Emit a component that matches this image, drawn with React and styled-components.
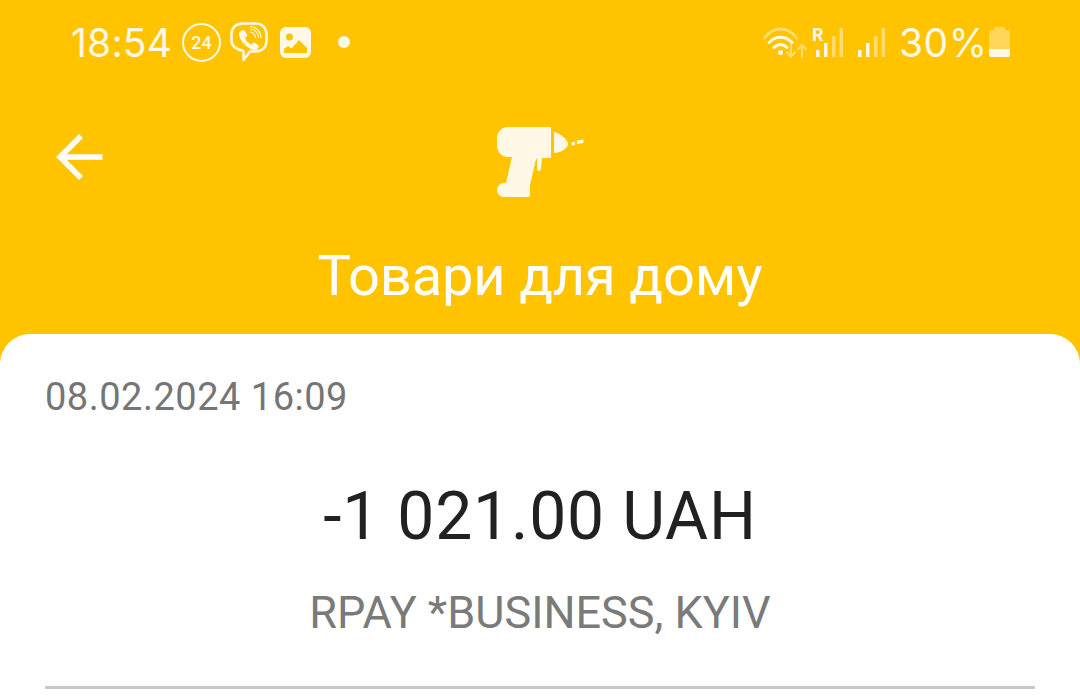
import React from "react";
import styled, { createGlobalStyle } from "styled-components";

const Global = createGlobalStyle`
  html, body { margin: 0; padding: 0; background: #fff; }
  body { font-family: Roboto, "Liberation Sans", sans-serif; }
`;
const Page = styled.div`
  width: 1080px; height: 698px; overflow: hidden; background: #FFC300;
  display: flex; flex-direction: column;
`;
const StatusBar = styled.div`
  height: 84px; box-sizing: border-box; padding: 0 70px 0 71px;
  display: flex; align-items: center; justify-content: space-between; color: #fff;
`;
const StatusGroup = styled.div`display: flex; align-items: center;`;
const Clock = styled.span`font: 400 39px Inter, sans-serif; letter-spacing: 0.2px; color: #fff8e6; width: 99px; white-space: nowrap;`;
const Percent = styled.span`font: 400 39px Inter, sans-serif; letter-spacing: 0.5px; color: #fff8e6; margin: 0 7px 0 14px; width: 83px; white-space: nowrap;`;
const Dot = styled.span`width: 12px; height: 12px; border-radius: 50%; background: #fff8e6; margin-left: 27px;`;
const Badge = styled.span`
  width: 39px; height: 39px; box-sizing: border-box; border: 2px solid #fff8e6; border-radius: 50%;
  display: flex; align-items: center; justify-content: center; margin: 0 9px 0 12px;
  font: 500 18px Roboto, sans-serif; color: #fff8e6;
`;
const GlyphSlot = styled.span`display: flex; margin-left: ${p => p.$left || 0}px;`;
const Header = styled.div`
  height: 250px; display: flex; flex-direction: column; align-items: center; position: relative;
`;
const BackButton = styled.div`position: absolute; left: 54px; top: 47px; width: 52px; height: 52px;`;
const IconWrap = styled.div`margin-top: 43px; height: 70px; display: flex;`;
const Title = styled.div`margin-top: 46px; font-size: 56px; line-height: 66px; letter-spacing: -0.15px; color: #fff; text-align: center;`;
const Card = styled.div`
  flex: 1; background: #fff; border-radius: 30px 30px 0 0; padding: 0 45px; display: flex; flex-direction: column;
`;
const DateText = styled.div`margin-top: 41px; font-size: 38px; line-height: 44px; color: #757575; letter-spacing: 0.5px;`;
const Amount = styled.div`margin-top: 59px; font-size: 66px; line-height: 78px; color: #212121; text-align: center; letter-spacing: 0.8px;`;
const Merchant = styled.div`margin-top: 31px; font-size: 45px; line-height: 52px; color: #7a7a7a; text-align: center;`;
const Divider = styled.div`margin-top: 47px; height: 3px; background: #c8c8c8;`;
const RoamLabel = styled.span`
  font: 700 18px Roboto, sans-serif; color: #fff8e6; position: absolute; left: -4px; top: -4px;
`;
const SignalBox = styled.span`position: relative; display: flex; margin-left: ${p => p.$left || 0}px;`;

const Viber = () => (
  <svg width="38" height="40" viewBox="0 0 38 40" fill="none" stroke="#fff8e6" strokeWidth="2.6" style={{ display: "block" }}>
    <path d="M13 1.500h12c7 0 11.500 4 11.500 11v6c0 7-4.500 11-11.500 11h-5l-6.500 8.500v-9C7 27.500 1.500 25 1.500 18.500v-6c0-7 4.500-11 11.500-11Z" strokeLinejoin="round" />
    <path d="M10 9.500l3-1.500c1 0 1.500.5 2 1l2 3.500c.3 1 0 1.500-.5 2l-1.500 1.500c1 3 3.500 5.500 6.500 6.500l1.500-1.500c.8-.6 1.500-.6 2 0l3 2c1 .8 1 1.500.5 2.500l-1.500 2c-1 1-2.500 1-4 .5C15 25 9 17 9 12c0-1 .3-2 1-2.500Z" fill="#fff8e6" stroke="none" />
    <path d="M20 10c3 0 5.500 2.500 5.500 6M20 7c5 0 8.500 4 8.500 9M20 4.500c6 0 11 5 11 11.500" strokeWidth="1.200" />
  </svg>
);
const Gallery = () => (
  <svg width="31" height="31" viewBox="0 0 31 31" style={{ display: "block" }}>
    <rect width="31" height="31" rx="6" fill="#fff8e6" />
    <circle cx="9.500" cy="10" r="3.500" fill="#FFC300" />
    <path d="M4 26v-4l4-3 3.500 2.500L19 13l8 8v5Z" fill="#FFC300" />
  </svg>
);
const Wifi = () => (
  <svg width="45" height="31" viewBox="0 0 45 31" fill="none" strokeLinecap="round" style={{ display: "block" }}>
    <path d="M1.500 11C10-1 25-1 33.500 11" stroke="#ffdc6b" strokeWidth="3" />
    <path d="M6 15.500c6.500-7 16.500-7 23 0" stroke="#fff8e6" strokeWidth="3" />
    <path d="M11 20.500c4-4 9-4 13 0" stroke="#fff8e6" strokeWidth="3" />
    <circle cx="17.500" cy="25.500" r="2.500" fill="#fff8e6" />
    <path d="M28 17v12.500M24 25.500l4 4 4-4" stroke="#ffdc6b" strokeWidth="2.200" />
    <path d="M39 30V18M35 22l4-4 4 4" stroke="#ffdc6b" strokeWidth="2.200" />
  </svg>
);
const BARS = [[0, 22, 7], [8, 15, 14], [16, 8, 21], [23.500, 0, 29]];
const Signal = ({ on }) => (
  <svg width="27" height="29" viewBox="0 0 27 29" style={{ display: "block" }}>
    {BARS.map(([x, y, h], i) => (
      <rect key={x} x={x} y={y} width="3.500" height={h} fill={i < on ? "#fff8e6" : "#ffdc6b"} />
    ))}
  </svg>
);
const Battery = () => (
  <svg width="21" height="30" viewBox="0 0 21 30" style={{ display: "block" }}>
    <path d="M5 1a1 1 0 0 1 1-1h9a1 1 0 0 1 1 1v2h3a2 2 0 0 1 2 2v23a2 2 0 0 1-2 2H2a2 2 0 0 1-2-2V5a2 2 0 0 1 2-2h3Z" fill="#ffd65a" />
    <path d="M0 22h21v6a2 2 0 0 1-2 2H2a2 2 0 0 1-2-2Z" fill="#fff8e6" />
  </svg>
);
const Drill = () => (
  <svg width="87" height="70" viewBox="0 0 87 70" fill="#fff8e6" style={{ display: "block" }}>
    <path d="M11 0h42a1 1 0 0 1 1 1v29a1 1 0 0 1-1 1H42l-3 1-6 26v10a2 2 0 0 1-2 2H7a7 7 0 0 1-7-7 7 7 0 0 1 7-7h2l6-26h-4a11 11 0 0 1-11-11V11A11 11 0 0 1 11 0Z" />
    <path d="M40 31h5l-1 11a2 2 0 0 1-4 0Z" />
    <path d="M57 5c5 1 12 6 14 11 .3 1 .3 1.500 0 2-2 5-9 8-14 8Z" />
    <path d="M74.500 15.500l3.500-1v3.500l-3.500 .5ZM80 13.500l6.500-1v3.500l-6.500 1Z" />
  </svg>
);
const Arrow = () => (
  <svg width="52" height="52" viewBox="0 0 52 52" fill="none" stroke="#fff" strokeWidth="5.500" style={{ display: "block" }}>
    <path d="M48.500 26H7M27 5 6 26l21 21" />
  </svg>
);

export default function App() {
  return (
    <Page>
      <Global />
      <StatusBar>
        <StatusGroup>
          <Clock>18:54</Clock>
          <Badge>24</Badge>
          <Viber />
          <GlyphSlot $left={12}><Gallery /></GlyphSlot>
          <Dot />
        </StatusGroup>
        <StatusGroup>
          <Wifi />
          <SignalBox $left={8}><RoamLabel>R</RoamLabel><Signal on={2} /></SignalBox>
          <SignalBox $left={15}><Signal on={2} /></SignalBox>
          <Percent>30%</Percent>
          <Battery />
        </StatusGroup>
      </StatusBar>
      <Header>
        <BackButton><Arrow /></BackButton>
        <IconWrap><Drill /></IconWrap>
        <Title>Товари для дому</Title>
      </Header>
      <Card>
        <DateText>08.02.2024 16:09</DateText>
        <Amount>-1 021.00 UAH</Amount>
        <Merchant>RPAY *BUSINESS, KYIV</Merchant>
        <Divider />
      </Card>
    </Page>
  );
}
